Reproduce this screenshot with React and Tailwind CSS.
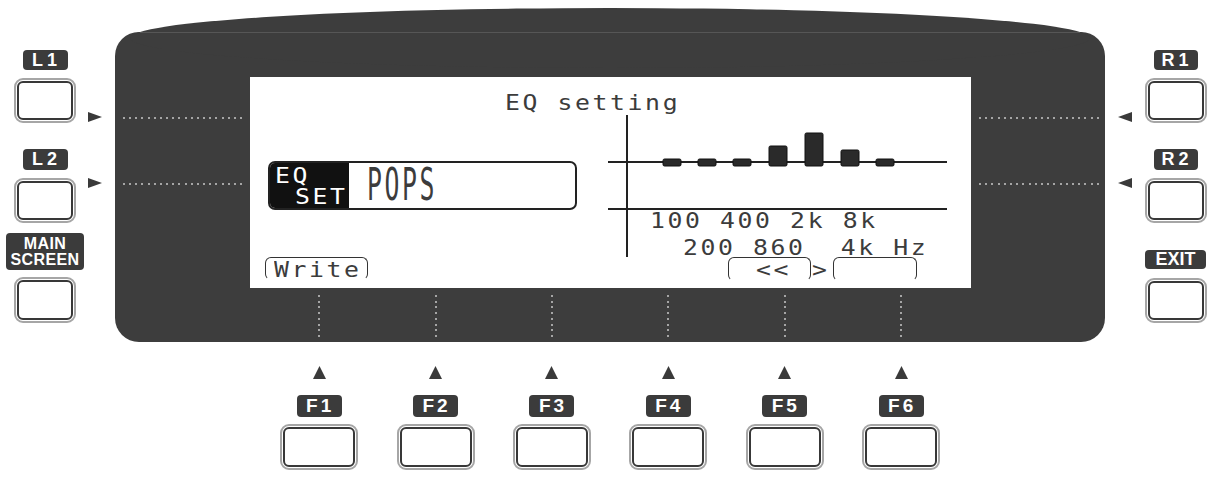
import React from "react";

const LCDBASE = "font-['DejaVu_Sans_Mono','Liberation_Mono',monospace] text-[21px] leading-[20px] whitespace-pre";
const SANS = "font-['Liberation_Sans',Arial,sans-serif]";

function Lcd({ children, cls = "" }) {
  return (
    <span className={"inline-block origin-left scale-x-[1.18] tracking-[2.2px] " + LCDBASE + " " + cls}>
      {children}
    </span>
  );
}

function Btn({ size }) {
  return (
    <div className={"rounded-[9px] border-2 border-[#a6a6a6] bg-white p-px " + size}>
      <div className="h-full w-full rounded-[6px] border-2 border-[#383838]" />
    </div>
  );
}

function Label({ cls, children }) {
  return (
    <div className={"flex items-center justify-center rounded-[4px] bg-[#3b3b3b] text-white font-bold " + SANS + " " + cls}>
      {children}
    </div>
  );
}

function HDots() {
  return (
    <div className="flex h-[2px] justify-between">
      {Array.from({ length: 20 }).map((_, i) => (
        <span key={i} className="h-[2px] w-[2px] rounded-full bg-[#c8c8c8]" />
      ))}
    </div>
  );
}

function VDots() {
  return (
    <div className="flex h-[42px] w-[2px] flex-col justify-between">
      {Array.from({ length: 8 }).map((_, i) => (
        <span key={i} className="h-[2px] w-[2px] rounded-full bg-[#c8c8c8]" />
      ))}
    </div>
  );
}

function TriRight() {
  return (
    <svg width="14" height="10" viewBox="0 0 14 10" className="block">
      <polygon points="0,0 14,5 0,10" fill="#3a3a3a" />
    </svg>
  );
}
function TriLeft() {
  return (
    <svg width="14" height="10" viewBox="0 0 14 10" className="block">
      <polygon points="14,0 0,5 14,10" fill="#3a3a3a" />
    </svg>
  );
}
function TriUp() {
  return (
    <svg width="13" height="13" viewBox="0 0 13 13" className="block">
      <polygon points="6.5,0 13,13 0,13" fill="#3a3a3a" />
    </svg>
  );
}

const bars = [
  { x: 55, y: 44, h: 7 },
  { x: 90, y: 44, h: 7 },
  { x: 125, y: 44, h: 7 },
  { x: 161, y: 31, h: 20 },
  { x: 197, y: 18, h: 33 },
  { x: 233, y: 35, h: 16 },
  { x: 268, y: 44, h: 7 },
];

function Graph() {
  return (
    <div className="relative h-[142px] w-[339px]">
      <svg width="339" height="142" viewBox="0 0 339 142" className="absolute left-0 top-0">
        <line x1="19" y1="0" x2="19" y2="142" stroke="#222" strokeWidth="2" />
        <line x1="0" y1="47" x2="339" y2="47" stroke="#222" strokeWidth="2" />
        <line x1="0" y1="94" x2="339" y2="94" stroke="#222" strokeWidth="2" />
        {bars.map((b, i) => (
          <rect key={i} x={b.x} y={b.y} width="18" height={b.h} rx="1.5" fill="#2a2a2a" stroke="#111" strokeWidth="1" />
        ))}
      </svg>
      <div className="relative pt-[96px]">
        <div className="pl-[42px] leading-[20px]"><Lcd>100 400 2k 8k</Lcd></div>
        <div className="mt-[6px] pl-[75px] leading-[20px]"><Lcd>200 860  4k Hz</Lcd></div>
      </div>
    </div>
  );
}

function Screen() {
  return (
    <div className="flex h-[211px] w-[721px] flex-col bg-white text-[#3c3c3c]">
      <div className="h-[38px] pl-[255px] pt-[16px] leading-[20px]"><Lcd>EQ setting</Lcd></div>
      <div className="flex h-[142px]">
        <div className="w-[358px] pl-[18px] pt-[46px]">
          <div className="flex h-[49px] w-[309px] overflow-hidden rounded-[7px] border-2 border-[#222]">
            <div className="w-[79px] bg-[#111] pl-[5px] pt-[3px] text-white">
              <div className="leading-[20px]"><Lcd>EQ</Lcd></div>
              <div className="ml-[20px] leading-[20px]"><Lcd>SET</Lcd></div>
            </div>
            <div className="pl-[18px] pt-px leading-[20px]">
              <span className={"inline-block origin-top-left scale-x-[1.18] scale-y-[2.1] tracking-[2.2px] " + LCDBASE}>POPS</span>
            </div>
          </div>
        </div>
        <Graph />
      </div>
      <div className="flex h-[31px] items-start">
        <div className="ml-[15px] h-[23px] w-[103px] rounded-[6px] border-[1.5px] border-b-transparent border-[#333] pl-[8px] pt-[2px] leading-[20px]">
          <Lcd>Write</Lcd>
        </div>
        <div className="ml-[360px] h-[24px] w-[83px] rounded-[6px] border-[1.5px] border-b-transparent border-[#333] pl-[27px] pt-[2px] leading-[20px]">
          <Lcd>{"<<"}</Lcd>
        </div>
        <div className="w-[22px] pl-px pt-[3px] leading-[20px]"><Lcd>{">"}</Lcd></div>
        <div className="h-[24px] w-[84px] rounded-[6px] border-[1.5px] border-b-transparent border-[#333]" />
      </div>
    </div>
  );
}

export default function App() {
  const fcols = ["F1", "F2", "F3", "F4", "F5", "F6"];
  return (
    <div className="flex h-[478px] w-[1218px] overflow-hidden bg-white">
      {/* left buttons */}
      <div className="flex w-[90px] flex-col items-center pt-[50px]">
        <Label cls="h-[20px] w-[45px] text-[18px] tracking-[4px] pl-[3px]">L1</Label>
        <div className="mt-[8px]"><Btn size="h-[45px] w-[62px]" /></div>
        <div className="mt-[26px]"><Label cls="h-[21px] w-[45px] text-[18px] tracking-[4px] pl-[3px]">L2</Label></div>
        <div className="mt-[8px]"><Btn size="h-[45px] w-[62px]" /></div>
        <div className="mt-[10px]">
          <Label cls="h-[37px] w-[78px] flex-col text-center text-[16px] leading-[16px] tracking-[0.4px]">
            <div className="h-[16px]">MAIN</div>
            <div className="h-[16px]">SCREEN</div>
          </Label>
        </div>
        <div className="mt-[7px]"><Btn size="h-[46px] w-[62px]" /></div>
      </div>
      {/* left arrows */}
      <div className="w-[25px] pt-[112px]">
        <div className="-ml-[2px]"><TriRight /></div>
        <div className="-ml-[2px] mt-[56px]"><TriRight /></div>
      </div>
      {/* center */}
      <div className="flex w-[990px] flex-col">
        <div className="relative mt-[32px] h-[310px] rounded-[24px] bg-[#3d3d3d]">
          <div className="absolute left-[15px] right-[15px] top-[-24px] h-[60px] rounded-[50%] bg-[#3d3d3d]" />
          <div className="absolute left-[25px] right-[25px] top-0 h-px bg-[#565656]" />
          <div className="relative flex pt-[45px]">
            <div className="w-[135px] px-[8px] pt-[40px]">
              <HDots />
              <div className="mt-[64px]"><HDots /></div>
            </div>
            <Screen />
            <div className="w-[134px] pl-[8px] pr-[6px] pt-[40px]">
              <HDots />
              <div className="mt-[64px]"><HDots /></div>
            </div>
          </div>
          <div className="relative flex pl-[146px] pt-[7px]">
            {fcols.map((f) => (
              <div key={f} className="flex w-[116.4px] justify-center">
                <VDots />
              </div>
            ))}
          </div>
        </div>
        <div className="flex pl-[146px]">
          {fcols.map((f) => (
            <div key={f} className="flex w-[116.4px] flex-col items-center">
              <div className="mt-[24px]"><TriUp /></div>
              <div className="mt-[16px]">
                <Label cls="h-[22px] w-[45px] text-[19px] tracking-[3px] pl-[2px]">{f}</Label>
              </div>
              <div className="mt-[7px]"><Btn size="h-[46px] w-[78px]" /></div>
            </div>
          ))}
        </div>
      </div>
      {/* right arrows */}
      <div className="w-[35px] pl-[13px] pt-[112px]">
        <TriLeft />
        <div className="mt-[56px]"><TriLeft /></div>
      </div>
      {/* right buttons */}
      <div className="flex w-[71px] flex-col items-center pt-[50px]">
        <Label cls="h-[20px] w-[44px] text-[18px] tracking-[4px] pl-[3px]">R1</Label>
        <div className="mt-[8px]"><Btn size="h-[45px] w-[62px]" /></div>
        <div className="mt-[26px]"><Label cls="h-[21px] w-[44px] text-[18px] tracking-[4px] pl-[3px]">R2</Label></div>
        <div className="mt-[8px]"><Btn size="h-[45px] w-[62px]" /></div>
        <div className="mt-[27px]"><Label cls="h-[19px] w-[61px] text-[18px] tracking-[0px]">EXIT</Label></div>
        <div className="mt-[9px]"><Btn size="h-[45px] w-[62px]" /></div>
      </div>
    </div>
  );
}
